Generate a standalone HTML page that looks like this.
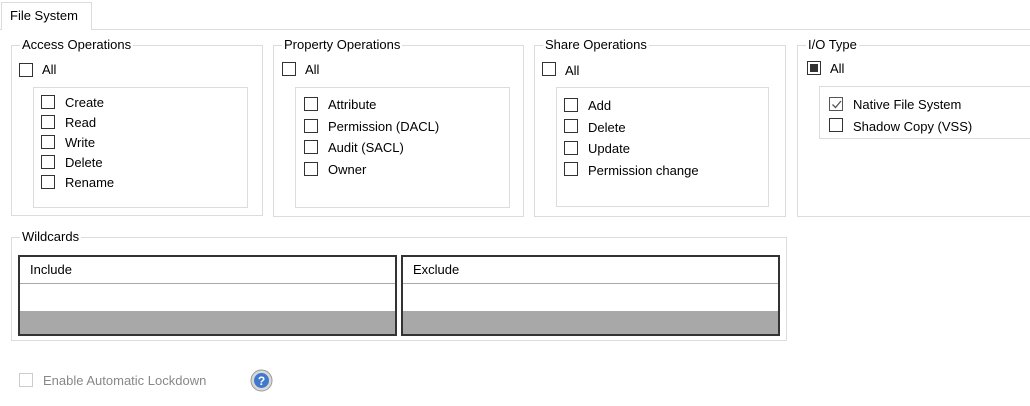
<!DOCTYPE html>
<html><head><style>
*{margin:0;padding:0;box-sizing:border-box}
body{width:1030px;height:406px;background:#fff;position:relative;overflow:hidden;font-family:"Liberation Sans",sans-serif;font-size:13px;color:#000}
.a{position:absolute}
.fr{position:absolute;border:1px solid #dcdcdc}
.lg{position:absolute;background:#fff;padding:0 2px;line-height:14px;white-space:nowrap}
.ib{position:absolute;border:1px solid #dcdcdc}
.cb{position:absolute;width:14px;height:14px;border:1px solid #333;background:#fff}
.t{position:absolute;line-height:14px;white-space:nowrap}
.tb{position:absolute;border:2px solid #333;border-width:2px 2px 2px 2px;background:#a8a8a8}
.tb .h{height:27px;background:#fff;border-bottom:1px solid #aaa;padding:6px 10px;line-height:14px}
.tb .r{height:27px;background:#fff}
</style></head><body>
<!-- tab -->
<div class="a" style="left:0;top:29px;width:1030px;height:1px;background:#dcdcdc"></div>
<div class="a" style="left:1px;top:2px;width:91px;height:28px;border:1px solid #dcdcdc;border-bottom:none;background:#fff"></div>
<div class="t" style="left:10px;top:9px">File System</div>

<!-- Access -->
<div class="fr" style="left:11px;top:45px;width:252px;height:171px"></div>
<div class="lg" style="left:20px;top:38px">Access Operations</div>
<div class="cb" style="left:19px;top:63px"></div><div class="t" style="left:42px;top:63px">All</div>
<div class="ib" style="left:33px;top:87px;width:215px;height:121px"></div>
<div class="cb" style="left:41px;top:95px"></div><div class="t" style="left:65px;top:96px">Create</div>
<div class="cb" style="left:41px;top:115px"></div><div class="t" style="left:65px;top:116px">Read</div>
<div class="cb" style="left:41px;top:135px"></div><div class="t" style="left:65px;top:136px">Write</div>
<div class="cb" style="left:41px;top:155px"></div><div class="t" style="left:65px;top:156px">Delete</div>
<div class="cb" style="left:41px;top:175px"></div><div class="t" style="left:65px;top:176px">Rename</div>

<!-- Property -->
<div class="fr" style="left:273px;top:45px;width:251px;height:172px"></div>
<div class="lg" style="left:282px;top:38px">Property Operations</div>
<div class="cb" style="left:282px;top:62px"></div><div class="t" style="left:305px;top:63px">All</div>
<div class="ib" style="left:295px;top:87px;width:215px;height:121px"></div>
<div class="cb" style="left:304px;top:97px"></div><div class="t" style="left:328px;top:98px">Attribute</div>
<div class="cb" style="left:304px;top:119px"></div><div class="t" style="left:328px;top:120px">Permission (DACL)</div>
<div class="cb" style="left:304px;top:140px"></div><div class="t" style="left:328px;top:141px">Audit (SACL)</div>
<div class="cb" style="left:304px;top:162px"></div><div class="t" style="left:328px;top:163px">Owner</div>

<!-- Share -->
<div class="fr" style="left:534px;top:45px;width:252px;height:172px"></div>
<div class="lg" style="left:543px;top:38px">Share Operations</div>
<div class="cb" style="left:542px;top:62px"></div><div class="t" style="left:565px;top:64px">All</div>
<div class="ib" style="left:556px;top:87px;width:213px;height:120px"></div>
<div class="cb" style="left:564px;top:98px"></div><div class="t" style="left:588px;top:99px">Add</div>
<div class="cb" style="left:564px;top:119px"></div><div class="t" style="left:588px;top:121px">Delete</div>
<div class="cb" style="left:564px;top:141px"></div><div class="t" style="left:588px;top:142px">Update</div>
<div class="cb" style="left:564px;top:162px"></div><div class="t" style="left:588px;top:164px">Permission change</div>

<!-- IO -->
<div class="fr" style="left:797px;top:45px;width:240px;height:172px"></div>
<div class="lg" style="left:806px;top:38px">I/O Type</div>
<div class="cb" style="left:807px;top:61px"><div class="a" style="left:2px;top:2px;width:8px;height:8px;background:#333"></div></div><div class="t" style="left:830px;top:62px">All</div>
<div class="ib" style="left:819px;top:86px;width:220px;height:53px"></div>
<div class="cb" style="left:829px;top:97px;border-color:#555"><svg class="a" style="left:1px;top:1px" width="11" height="11"><path d="M1.5 5.5 L4.5 8.5 L10 2" stroke="#555" stroke-width="1.3" fill="none"/></svg></div><div class="t" style="left:853px;top:98px">Native File System</div>
<div class="cb" style="left:829px;top:118px"></div><div class="t" style="left:853px;top:120px">Shadow Copy (VSS)</div>

<!-- Wildcards -->
<div class="fr" style="left:11px;top:237px;width:776px;height:104px"></div>
<div class="lg" style="left:20px;top:230px">Wildcards</div>
<div class="tb" style="left:18px;top:255px;width:379px;height:81px"><div class="h">Include</div><div class="r"></div></div>
<div class="tb" style="left:401px;top:255px;width:379px;height:81px"><div class="h">Exclude</div><div class="r"></div></div>

<!-- Lockdown -->
<div class="cb" style="left:19px;top:373px;border-color:#ccc"></div>
<div class="t" style="left:43px;top:374px;color:#888">Enable Automatic Lockdown</div>
<svg class="a" style="left:250px;top:369px" width="23" height="23">
<circle cx="11.5" cy="11.5" r="10.5" fill="#d8d8d8" stroke="#9a9a9a"/>
<circle cx="11.5" cy="11.5" r="7.5" fill="#3f78cc"/>
<text x="11.5" y="16" text-anchor="middle" font-family="Liberation Sans" font-weight="bold" font-size="12" fill="#fff">?</text>
</svg>
</body></html>
